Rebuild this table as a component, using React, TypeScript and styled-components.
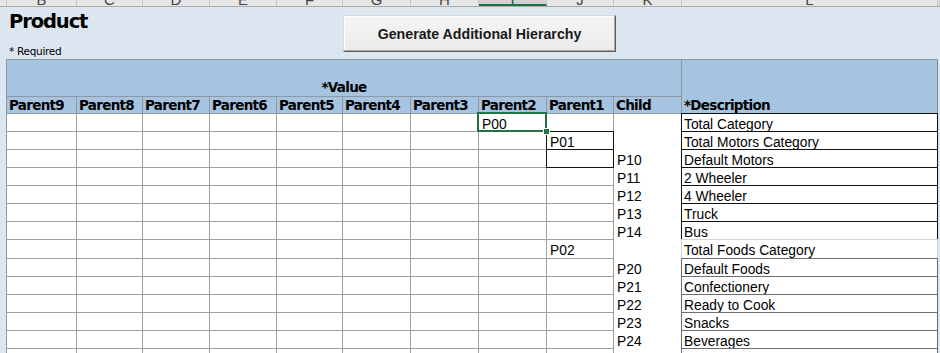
import React from "react";
import styled, { createGlobalStyle, css } from "styled-components";

const GlobalStyle = createGlobalStyle`
  html, body { margin: 0; padding: 0; background: #dce6f1; }
  body { width: 940px; height: 353px; overflow: hidden; }
  #root { width: 940px; height: 353px; overflow: hidden; }
`;

const PAGE_COLS = "7px 70px 66px 67px 67px 66px 68px 68px 68px 67px 68px 256px 2px";
const TABLE_COLS = "70px 66px 67px 67px 66px 68px 68px 68px 67px 68px 256px";

const Sheet = styled.div`
  display: flex;
  flex-direction: column;
  width: 940px;
  height: 353px;
  overflow: hidden;
  background: #dce6f1;
`;

const ColumnStrip = styled.div`
  display: grid;
  grid-template-columns: ${PAGE_COLS};
  height: 7px;
  flex: none;
  background: #e6e6e6;
  border-bottom: 1px solid #ababab;
  box-sizing: border-box;
`;

const ColumnLetter = styled.div<{ $selected?: boolean }>`
  overflow: hidden;
  height: 6px;
  text-align: center;
  border-right: 1px solid #c6c6c6;
  box-sizing: border-box;
  font-family: "Liberation Sans", Arial, sans-serif;
  font-size: 15px;
  color: #444;
  ${(p) =>
    p.$selected &&
    css`
      background: #d2d2d2;
      border-bottom: 2px solid #217346;
      color: #1e5c38;
    `}
  span {
    display: block;
    margin-top: -8px;
    line-height: 15px;
  }
`;

const TopArea = styled.div`
  display: grid;
  grid-template-columns: ${PAGE_COLS};
  height: 52px;
  flex: none;
`;

const TitleBlock = styled.div`
  grid-column: 2 / 7;
  display: flex;
  flex-direction: column;
  padding-left: 2px;
`;

const Title = styled.h1`
  margin: 0;
  margin-top: 3px;
  font-family: "DejaVu Sans", Verdana, sans-serif;
  font-weight: bold;
  font-size: 19.5px;
  letter-spacing: -1.1px;
  line-height: 24px;
  color: #000;
`;

const Required = styled.div`
  margin-top: 11px;
  font-family: "DejaVu Sans", Verdana, sans-serif;
  font-size: 10.5px;
  letter-spacing: -0.3px;
  line-height: 12px;
  color: #000;
`;

const ActionButton = styled.button`
  grid-column: 7 / 11;
  margin-top: 8px;
  height: 37px;
  width: 273px;
  box-sizing: border-box;
  background: linear-gradient(#f5f5f5, #ebebeb);
  border: 1px solid;
  border-color: #d8d8d8 #5e5e5e #5e5e5e #d8d8d8;
  box-shadow: inset -1px -1px 0 #a8a8a8, inset 1px 1px 0 #ffffff;
  font-family: "Liberation Sans", Arial, sans-serif;
  font-weight: bold;
  font-size: 14.2px;
  color: #1a1a1a;
  padding: 0;
  cursor: pointer;
`;

const Table = styled.div`
  display: grid;
  grid-template-columns: ${TABLE_COLS};
  grid-template-rows: 37px 17px repeat(7, 18px) 19px repeat(6, 18px);
  margin-left: 6px;
  width: 932px;
  border-left: 1px solid #8d99a6;
  border-top: 1px solid #8d99a6;
  box-sizing: border-box;
  flex: none;
`;

const HeaderCell = styled.div<{ $span?: string; $rows?: string }>`
  grid-column: ${(p) => p.$span || "auto"};
  grid-row: ${(p) => p.$rows || "auto"};
  background: #a6c3df;
  border-right: 1px solid #8d99a6;
  border-bottom: 1px solid #8d99a6;
  box-sizing: border-box;
  display: flex;
  align-items: flex-end;
  padding: 0 0 0 2px;
  font-family: "DejaVu Sans", Verdana, sans-serif;
  font-weight: bold;
  font-size: 13.5px;
  letter-spacing: -0.7px;
  line-height: 16px;
  color: #000;
  white-space: nowrap;
  overflow: hidden;
`;

const ValueHeader = styled(HeaderCell)`
  justify-content: center;
  padding: 0 0 1px 0;
`;

const DescHeader = styled(HeaderCell)`
  border-bottom: 1px solid #404040;
  border-right: 1px solid #8a8a8a;
  padding-bottom: 0;
`;

type Frame = "black" | "dark" | "faint";

const frameColor: Record<Frame, string> = {
  black: "#111",
  dark: "#6e6e6e",
  faint: "#d4d4d4",
};

const Cell = styled.div<{ $plain?: boolean; $frame?: Frame; $desc?: boolean }>`
  position: relative;
  background: #fff;
  box-sizing: border-box;
  border-right: 1px solid ${(p) => (p.$plain ? "#ffffff" : "#a0a0a0")};
  border-bottom: 1px solid ${(p) => (p.$plain ? "#ffffff" : "#a0a0a0")};
  ${(p) => p.$desc && css`border-right-color: #8a8a8a;`}
  padding-left: ${(p) => (p.$desc ? "2px" : "3px")};
  padding-top: 2.5px;
  font-family: "Liberation Sans", Arial, sans-serif;
  font-size: 13.8px;
  line-height: 16px;
  color: #000;
  white-space: nowrap;
  overflow: visible;
  ${(p) =>
    p.$frame &&
    css`
      &::before {
        content: "";
        position: absolute;
        top: -1px;
        left: -1px;
        right: -1px;
        bottom: -1px;
        border: 1px solid ${frameColor[p.$frame]};
        pointer-events: none;
      }
    `}
`;

const Selection = styled.div`
  position: absolute;
  top: -2px;
  left: -2px;
  right: -1px;
  bottom: -1px;
  border: 2px solid #217346;
  pointer-events: none;
  z-index: 2;
  &::after {
    content: "";
    position: absolute;
    right: -5px;
    bottom: -5px;
    width: 5px;
    height: 5px;
    background: #217346;
    border: 1px solid #fff;
  }
`;

const letters = ["B", "C", "D", "E", "F", "G", "H", "I", "J", "K", "L"];
const parents = ["Parent9", "Parent8", "Parent7", "Parent6", "Parent5", "Parent4", "Parent3", "Parent2", "Parent1", "Child"];

type Row = {
  p2?: string;
  p1?: string;
  p1Frame?: boolean;
  child?: string;
  desc?: string;
  descFrame?: Frame;
  selected?: boolean;
};

const rows: Row[] = [
  { p2: "P00", selected: true, desc: "Total Category", descFrame: "black" },
  { p1: "P01", p1Frame: true, desc: "Total Motors Category", descFrame: "black" },
  { p1Frame: true, child: "P10", desc: "Default Motors", descFrame: "black" },
  { child: "P11", desc: "2 Wheeler", descFrame: "black" },
  { child: "P12", desc: "4 Wheeler", descFrame: "black" },
  { child: "P13", desc: "Truck", descFrame: "black" },
  { child: "P14", desc: "Bus", descFrame: "black" },
  { p1: "P02", desc: "Total Foods Category", descFrame: "faint" },
  { child: "P20", desc: "Default Foods", descFrame: "dark" },
  { child: "P21", desc: "Confectionery", descFrame: "dark" },
  { child: "P22", desc: "Ready to Cook", descFrame: "dark" },
  { child: "P23", desc: "Snacks", descFrame: "dark" },
  { child: "P24", desc: "Beverages", descFrame: "dark" },
  { desc: "", descFrame: "dark" },
];

export default function App() {
  return (
    <>
      <GlobalStyle />
      <Sheet>
        <ColumnStrip>
          <ColumnLetter />
          {letters.map((l) => (
            <ColumnLetter key={l} $selected={l === "I"}>
              <span>{l}</span>
            </ColumnLetter>
          ))}
          <ColumnLetter />
        </ColumnStrip>

        <TopArea>
          <TitleBlock>
            <Title>Product</Title>
            <Required>* Required</Required>
          </TitleBlock>
          <ActionButton type="button">Generate Additional Hierarchy</ActionButton>
        </TopArea>

        <Table>
          <ValueHeader $span="1 / 11">*Value</ValueHeader>
          <DescHeader $span="11" $rows="1 / 3">*Description</DescHeader>
          {parents.map((p) => (
            <HeaderCell key={p}>{p}</HeaderCell>
          ))}

          {rows.map((r, i) => (
            <React.Fragment key={i}>
              {Array.from({ length: 7 }).map((_, c) => (
                <Cell key={c} />
              ))}
              <Cell>
                {r.p2}
                {r.selected && <Selection />}
              </Cell>
              <Cell $frame={r.p1Frame ? "black" : undefined}>{r.p1}</Cell>
              <Cell $plain>{r.child}</Cell>
              <Cell $desc $frame={r.descFrame}>
                {r.desc}
              </Cell>
            </React.Fragment>
          ))}
        </Table>
      </Sheet>
    </>
  );
}
